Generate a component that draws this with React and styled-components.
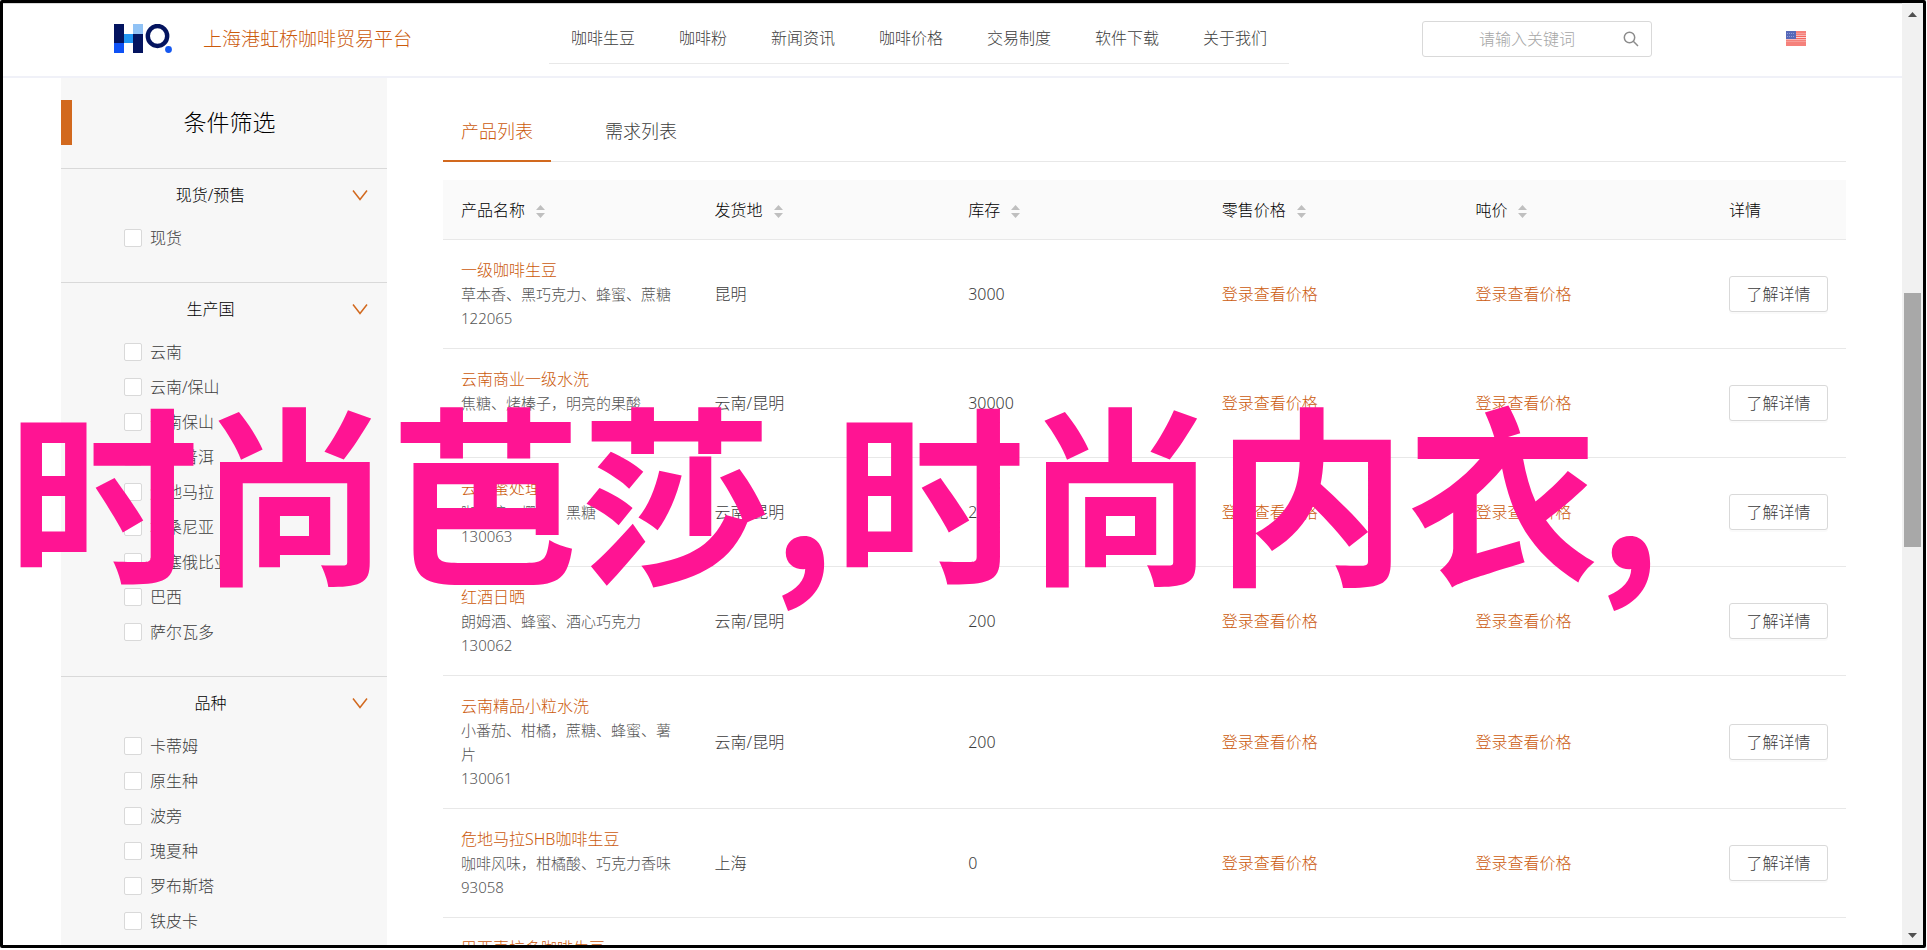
import React from "react";
import styled, { createGlobalStyle } from "styled-components";

const ACCENT = "#d2691e";
const ACCENT_TEXT = "#cb5a0c";
const LINE = "#e8e8e8";
const TEXT = "#3c3c3c";

const GlobalStyle = createGlobalStyle`
  * { box-sizing: border-box; }
  body {
    margin: 0;
    overflow: hidden;
    background: #fff;
    color: ${TEXT};
    font: 300 16px/24px "Noto Sans", "Noto Sans CJK SC", sans-serif;
  }
  a { color: inherit; text-decoration: none; }
  button, input { font: inherit; color: inherit; }
`;

const Frame = styled.div`
  position: relative;
  display: flex;
  height: calc(100vh - 2px);
  margin-right: 1px;
  border: 3px solid #000;
  border-radius: 2px;
  overflow: hidden;
`;

const Page = styled.div`
  flex: 1;
  min-width: 0;
`;

const Header = styled.header`
  display: grid;
  grid-template-columns: 546px 1fr 230px 250px;
  align-items: center;
  height: 75px;
  padding-bottom: 3px;
  border-top: 1px solid #d9d9d9;
  border-bottom: 2px solid #f0f1f8;
`;

const Brand = styled.a`
  display: flex;
  align-items: center;
  gap: 31px;
  padding-left: 111px;
  color: ${ACCENT_TEXT};
  font-size: 19px;
`;

const Nav = styled.nav`
  display: flex;
  justify-self: start;
  gap: 44px;
  height: 50px;
  padding: 0 22px;
  border-bottom: 1px solid ${LINE};
  line-height: 49px;
  white-space: nowrap;
`;

const Search = styled.form`
  display: flex;
  align-items: center;
  height: 36px;
  padding: 0 12px;
  border: 1px solid #d9d9d9;
  border-radius: 3px;
`;

const SearchInput = styled.input`
  flex: 1;
  min-width: 0;
  padding: 0 4px 0 0;
  border: 0;
  outline: 0;
  background: none;
  text-align: center;
  &::placeholder { color: #a6a6a6; }
`;

const IconButton = styled.button`
  display: flex;
  padding: 0;
  border: 0;
  background: none;
`;

const LanguageButton = styled(IconButton)`
  margin-left: 134px;
`;

const Body = styled.div`
  display: flex;
  align-items: flex-start;
  gap: 56px;
  padding: 0 56px 0 58px;
`;

const Sidebar = styled.aside`
  flex: 0 0 326px;
  background: #f7f7f7;
`;

const SidebarTitle = styled.h2`
  display: flex;
  align-items: center;
  height: 90px;
  margin: 0;
  padding-bottom: 2px;
  color: #000;
  font-size: 23px;
  font-weight: inherit;
  text-align: center;
  &::before {
    content: "";
    width: 11px;
    height: 45px;
    background: ${ACCENT};
  }
  span { flex: 1; }
`;

const FilterGroup = styled.fieldset`
  margin: 0;
  padding: 0 0 27px;
  border: 0;
  border-top: 1px solid #d9d9d9;
`;

const FilterToggle = styled.button`
  display: flex;
  align-items: center;
  gap: 3px;
  width: 100%;
  height: 51px;
  padding: 0 19px 0 11px;
  border: 0;
  background: none;
  color: #000;
  span { flex: 1; }
`;

const Option = styled.label`
  display: flex;
  align-items: center;
  gap: 8px;
  height: 35px;
  padding-left: 63px;
`;

const Checkbox = styled.input`
  appearance: none;
  width: 18px;
  height: 18px;
  margin: 0;
  border: 1px solid #d9d9d9;
  border-radius: 2px;
  background: #fff;
  &:checked { background: ${ACCENT}; }
`;

const Main = styled.main`
  flex: 1;
  min-width: 0;
  padding-top: 24px;
`;

const Tabs = styled.div`
  display: flex;
  gap: 36px;
  margin-bottom: 18px;
  box-shadow: inset 0 -1px ${LINE};
`;

const Tab = styled.button`
  height: 60px;
  padding: 0 18px;
  border: 0;
  border-bottom: 2px solid ${(p) => (p.$active ? ACCENT : "transparent")};
  background: none;
  color: ${(p) => (p.$active ? ACCENT_TEXT : TEXT)};
  font-size: 18px;
`;

const Table = styled.table`
  width: 100%;
  table-layout: fixed;
  border-collapse: separate;
  border-spacing: 0;
`;

const HeadCell = styled.th`
  width: ${(p) => p.$width || "auto"};
  height: 60px;
  padding: 0 18px;
  border-bottom: 1px solid ${LINE};
  background: #fafafa;
  color: #000;
  font-weight: inherit;
  text-align: left;
  svg { margin-left: 11px; vertical-align: -2px; }
`;

const Cell = styled.td`
  padding: 18px;
  border-bottom: 1px solid ${LINE};
  vertical-align: middle;
`;

const ProductName = styled.a`
  display: block;
  color: ${ACCENT_TEXT};
`;

const Note = styled.div`
  color: #555;
  font-size: 15px;
`;

const PriceLink = styled.a`
  color: ${ACCENT_TEXT};
`;

const DetailButton = styled.button`
  display: block;
  width: 99px;
  height: 36px;
  padding: 0;
  border: 1px solid #d9d9d9;
  border-radius: 3px;
  background: #fff;
  box-shadow: 0 2px 0 rgba(0, 0, 0, 0.02);
`;

const ScrollBar = styled.div`
  display: flex;
  flex: 0 0 21px;
  flex-direction: column;
  align-items: center;
  justify-content: space-between;
  padding: 9px 0 7px;
  background: #f1f1f1;
`;

const Track = styled.div`
  display: grid;
  flex: 1;
  grid-template-rows: 270fr 254fr 380fr;
  padding: 5px 0;
`;

const Thumb = styled.div`
  grid-row: 2;
  width: 17px;
  background: #a8a8a8;
`;

const Banner = styled.div`
  position: absolute;
  top: 344px;
  left: 5px;
  color: #ff1493;
  font: 700 191px/280px "Noto Sans CJK SC", sans-serif;
  white-space: nowrap;
  pointer-events: none;
`;

const Logo = () => (
  <svg width="58" height="29" viewBox="0 0 58 29" aria-hidden="true">
    <path fill="#04145f" d="M0 0h10v19H0zM19 10h10v19H19z" />
    <path fill="#0f52f5" d="M0 19h10v10H0z" />
    <path fill="#2196f3" d="M10 10h9v9h-9z" />
    <path fill="#90c2f5" d="M19 0h10v10H19z" />
    <ellipse cx="43.500" cy="12" rx="9.700" ry="10" fill="none" stroke="#04145f" strokeWidth="4.400" />
    <circle cx="54.500" cy="25.500" r="3.400" fill="#1558f0" />
  </svg>
);

const SearchIcon = () => (
  <svg width="16" height="16" viewBox="0 0 16 16" fill="none" stroke="#8c8c8c" strokeWidth="1.500">
    <circle cx="6.500" cy="6.500" r="5.200" />
    <path d="M10.300 10.300l4.700 4.700" />
  </svg>
);

const Flag = () => (
  <svg width="20" height="15" viewBox="0 0 20 15">
    <path fill="#fbd5d3" d="M0 0h20v15H0z" />
    <path stroke="#f4665f" strokeWidth="1.300" d="M0 1h20M0 3.200h20M0 5.400h20M0 7.600h20M0 9.800h20M0 12h20M0 14h20" />
    <path fill="#5668b8" d="M0 0h10v8H0z" />
    <path stroke="#8f9bd6" strokeWidth="1" strokeDasharray="1 1" d="M1 2.500h8M1 5.500h8" />
  </svg>
);

const Chevron = () => (
  <svg width="16" height="12" viewBox="0 0 16 12" fill="none" stroke={ACCENT} strokeWidth="1.500">
    <path d="M1 1.500l7 9 7-9" />
  </svg>
);

const SortIcon = () => (
  <svg width="9" height="13" viewBox="0 0 9 13" fill="#bfbfbf" aria-hidden="true">
    <path d="M4.500 0L9 5H0zM0 8h9l-4.500 5z" />
  </svg>
);

const Arrow = ({ down }) => (
  <svg width="9" height="5" viewBox="0 0 9 5" fill="#505050">
    <path d={down ? "M0 0h9L4.500 5z" : "M4.500 0L9 5H0z"} />
  </svg>
);

const NAV = ["咖啡生豆", "咖啡粉", "新闻资讯", "咖啡价格", "交易制度", "软件下载", "关于我们"];

const FILTERS = [
  { title: "现货/预售", options: ["现货"] },
  {
    title: "生产国",
    options: ["云南", "云南/保山", "云南保山", "云南普洱", "危地马拉", "坦桑尼亚", "埃塞俄比亚", "巴西", "萨尔瓦多"],
  },
  { title: "品种", options: ["卡蒂姆", "原生种", "波旁", "瑰夏种", "罗布斯塔", "铁皮卡"] },
];

const COLUMNS = ["产品名称", "发货地", "库存", "零售价格", "吨价"];

const PRODUCTS = [
  { name: "一级咖啡生豆", note: "草本香、黑巧克力、蜂蜜、蔗糖", code: "122065", origin: "昆明", stock: 3000 },
  { name: "云南商业一级水洗", note: "焦糖、烤榛子，明亮的果酸", code: "130064", origin: "云南/昆明", stock: 30000 },
  { name: "云南蜜处理", note: "咖啡糖、樱桃、黑糖", code: "130063", origin: "云南/昆明", stock: 200 },
  { name: "红酒日晒", note: "朗姆酒、蜂蜜、酒心巧克力", code: "130062", origin: "云南/昆明", stock: 200 },
  { name: "云南精品小粒水洗", note: "小番茄、柑橘，蔗糖、蜂蜜、薯片", code: "130061", origin: "云南/昆明", stock: 200 },
  { name: "危地马拉SHB咖啡生豆", note: "咖啡风味，柑橘酸、巧克力香味", code: "93058", origin: "上海", stock: 0 },
  { name: "巴西喜拉多咖啡生豆" },
];

export default function App() {
  return (
    <>
      <GlobalStyle />
      <Frame>
        <Page>
          <Header>
            <Brand href="#">
              <Logo />
              上海港虹桥咖啡贸易平台
            </Brand>
            <Nav>
              {NAV.map((item) => (
                <a href="#" key={item}>{item}</a>
              ))}
            </Nav>
            <Search>
              <SearchInput placeholder="请输入关键词" aria-label="请输入关键词" />
              <IconButton type="button" aria-label="搜索">
                <SearchIcon />
              </IconButton>
            </Search>
            <LanguageButton type="button" aria-label="English">
              <Flag />
            </LanguageButton>
          </Header>
          <Body>
            <Sidebar>
              <SidebarTitle><span>条件筛选</span></SidebarTitle>
              {FILTERS.map((group) => (
                <FilterGroup key={group.title} aria-label={group.title}>
                  <FilterToggle type="button">
                    <span>{group.title}</span>
                    <Chevron />
                  </FilterToggle>
                  {group.options.map((option) => (
                    <Option key={option}>
                      <Checkbox type="checkbox" />
                      {option}
                    </Option>
                  ))}
                </FilterGroup>
              ))}
            </Sidebar>
            <Main>
              <Tabs role="tablist">
                <Tab type="button" role="tab" aria-selected="true" $active>产品列表</Tab>
                <Tab type="button" role="tab" aria-selected="false">需求列表</Tab>
              </Tabs>
              <Table>
                <thead>
                  <tr>
                    {COLUMNS.map((column) => (
                      <HeadCell key={column}>
                        {column}
                        <SortIcon />
                      </HeadCell>
                    ))}
                    <HeadCell $width="135px">详情</HeadCell>
                  </tr>
                </thead>
                <tbody>
                  {PRODUCTS.map((product) => (
                    <tr key={product.name}>
                      <Cell>
                        <ProductName href="#">{product.name}</ProductName>
                        {product.note && <Note>{product.note}</Note>}
                        {product.code && <Note>{product.code}</Note>}
                      </Cell>
                      {product.code && (
                        <>
                          <Cell>{product.origin}</Cell>
                          <Cell>{product.stock}</Cell>
                          <Cell><PriceLink href="#">登录查看价格</PriceLink></Cell>
                          <Cell><PriceLink href="#">登录查看价格</PriceLink></Cell>
                          <Cell><DetailButton type="button">了解详情</DetailButton></Cell>
                        </>
                      )}
                    </tr>
                  ))}
                </tbody>
              </Table>
            </Main>
          </Body>
        </Page>
        <ScrollBar aria-hidden="true">
          <Arrow />
          <Track><Thumb /></Track>
          <Arrow down />
        </ScrollBar>
        <Banner>时尚芭莎,时尚内衣,</Banner>
      </Frame>
    </>
  );
}
